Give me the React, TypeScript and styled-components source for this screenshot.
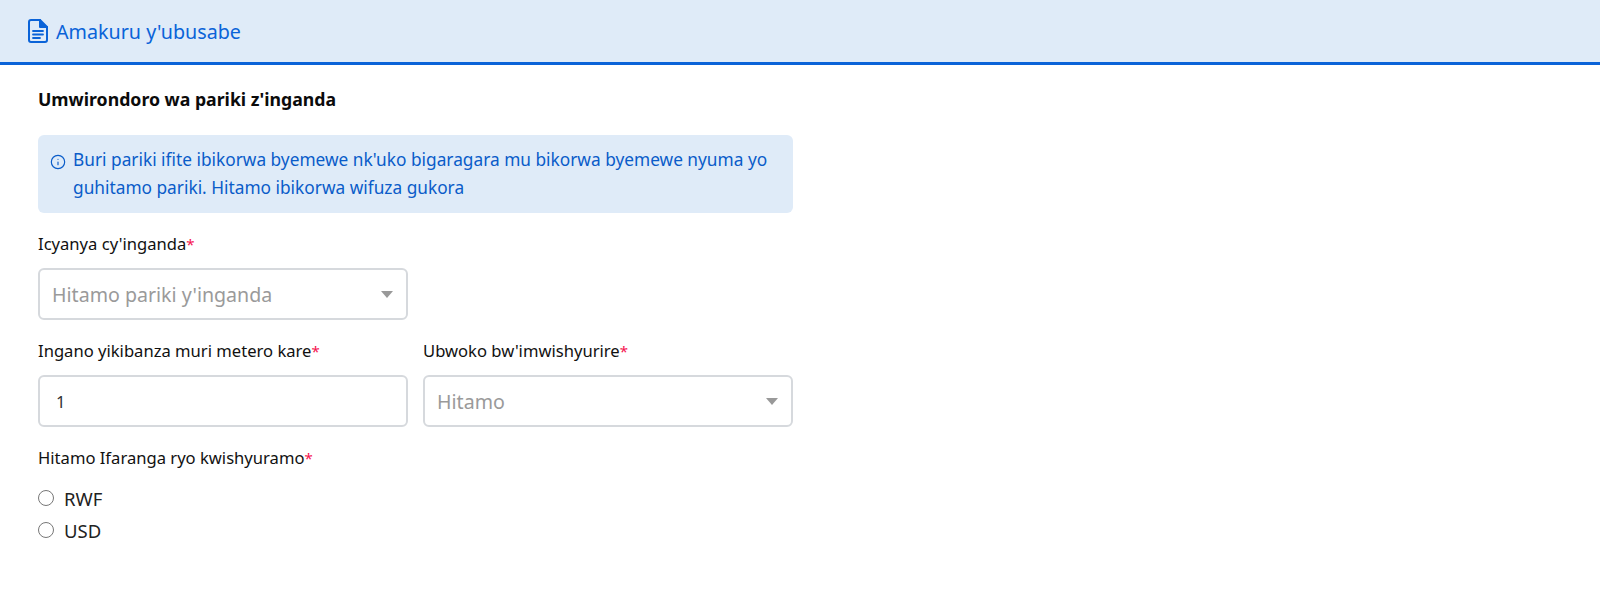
import React from "react";
import styled, { createGlobalStyle } from "styled-components";
import { Info } from "lucide-react";

const Global = createGlobalStyle`
  html, body {
    margin: 0;
    padding: 0;
    background: #fff;
    font-family: "Noto Sans", "Lato", sans-serif;
    color: #111;
  }
`;

const Header = styled.div`
  height: 62px;
  background-color: #dfebf8;
  border-bottom: 3px solid #0a63d8;
  display: flex;
  align-items: center;
  padding-left: 28px;
  gap: 8px;
  color: #0a63d8;
  font-size: 19.7px;
`;

const Content = styled.div`
  width: 755px;
  padding-left: 38px;
  display: flex;
  flex-direction: column;
`;

const Title = styled.h1`
  margin: 23px 0 25px;
  font-size: 17.7px;
  line-height: 22px;
  font-weight: 700;
  color: #0b0b0b;
`;

const Alert = styled.div`
  height: 78px;
  box-sizing: border-box;
  background-color: #dfebf8;
  border-radius: 6px;
  padding: 11px 12px 0 12px;
  display: flex;
  gap: 7px;
  color: #0a5cc9;
  font-size: 17.3px;
  line-height: 28px;
`;

const AlertIcon = styled.span`
  display: flex;
  flex: none;
  margin-top: 8px;
  height: 16px;
`;

const Row = styled.div`
  display: flex;
  gap: 15px;
`;

const Field = styled.div<{ $width: number }>`
  width: ${(p) => p.$width}px;
  display: flex;
  flex-direction: column;
`;

const Label = styled.label`
  display: block;
  margin-top: 20px;
  margin-bottom: 13px;
  font-size: 16.6px;
  line-height: 22px;
  color: #111;
`;

const Star = styled.span`
  color: #f5134f;
  font-size: 15px;
`;

const Box = styled.div`
  height: 52px;
  box-sizing: border-box;
  border: 2px solid #d6d9dd;
  border-radius: 6px;
  display: flex;
  align-items: center;
  justify-content: space-between;
  padding: 0 13px 0 12px;
  font-size: 19.6px;
  color: #9a9a9a;
`;

const Value = styled.span`
  color: #333;
  font-size: 16.6px;
  padding-left: 4px;
`;

const Caret = styled.span`
  width: 0;
  height: 0;
  border-left: 6.5px solid transparent;
  border-right: 6.5px solid transparent;
  border-top: 7px solid #999;
`;

const Radios = styled.div`
  display: flex;
  flex-direction: column;
  gap: 10px;
  margin-top: 5px;
`;

const RadioRow = styled.div`
  display: flex;
  align-items: center;
  gap: 10px;
  height: 22px;
  font-size: 18.5px;
  color: #222;
`;

const RadioDot = styled.span`
  width: 16px;
  height: 16px;
  box-sizing: border-box;
  border: 1.5px solid #777;
  border-radius: 50%;
  background: #fff;
`;

function DocIcon() {
  return (
    <svg width="20" height="24" viewBox="0 0 20 24" fill="none" stroke="currentColor" strokeWidth="2" strokeLinejoin="round" strokeLinecap="round">
      <path d="M3 1h9l7 7v13a2 2 0 0 1-2 2H3a2 2 0 0 1-2-2V3a2 2 0 0 1 2-2z" />
      <path d="M12 1v7h7" fill="currentColor" />
      <path d="M5 12h10M5 15.5h10M5 19h7" strokeWidth="1.8" />
    </svg>
  );
}

function Select({ text }: { text: string }) {
  return (
    <Box>
      <span>{text}</span>
      <Caret />
    </Box>
  );
}

export default function App() {
  return (
    <>
      <Global />
      <Header>
        <DocIcon />
        <span>Amakuru y'ubusabe</span>
      </Header>
      <Content>
        <Title>Umwirondoro wa pariki z'inganda</Title>
        <Alert>
          <AlertIcon>
            <Info size={16} strokeWidth={1.75} />
          </AlertIcon>
          <span>
            Buri pariki ifite ibikorwa byemewe nk'uko bigaragara mu bikorwa byemewe nyuma yo
            <br />
            guhitamo pariki. Hitamo ibikorwa wifuza gukora
          </span>
        </Alert>
        <Field $width={370}>
          <Label>
            Icyanya cy'inganda<Star>*</Star>
          </Label>
          <Select text="Hitamo pariki y'inganda" />
        </Field>
        <Row>
          <Field $width={370}>
            <Label>
              Ingano yikibanza muri metero kare<Star>*</Star>
            </Label>
            <Box>
              <Value>1</Value>
            </Box>
          </Field>
          <Field $width={370}>
            <Label>
              Ubwoko bw'imwishyurire<Star>*</Star>
            </Label>
            <Select text="Hitamo" />
          </Field>
        </Row>
        <Label>
          Hitamo Ifaranga ryo kwishyuramo<Star>*</Star>
        </Label>
        <Radios>
          <RadioRow>
            <RadioDot />
            RWF
          </RadioRow>
          <RadioRow>
            <RadioDot />
            USD
          </RadioRow>
        </Radios>
      </Content>
    </>
  );
}
